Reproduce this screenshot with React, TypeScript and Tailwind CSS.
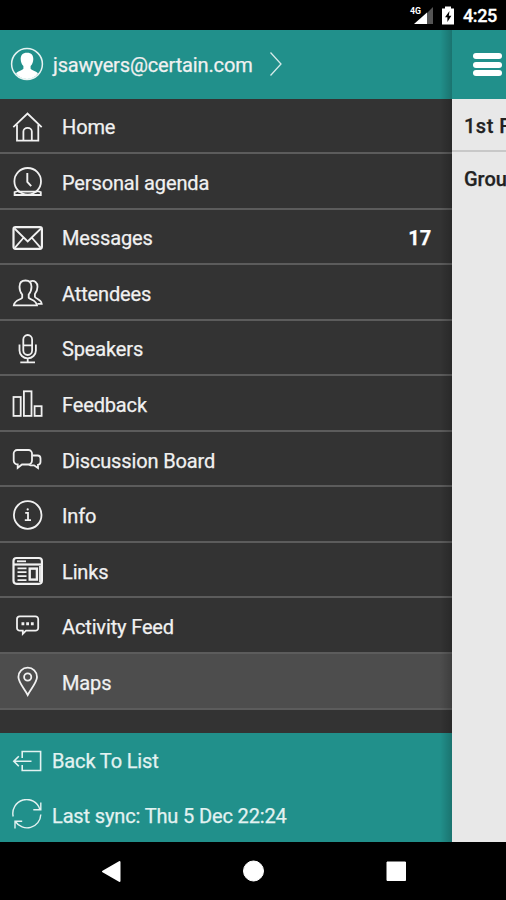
import type { ReactNode } from "react";

const menu: { label: string; icon: ReactNode; badge?: string; active?: boolean }[] = [
  {
    label: "Home",
    icon: (
      <>
        <path d="M1.3 16.2 15.5 2.6 29.7 16.2" />
        <path d="M5 13.5V29.6H26.3V13.5" />
        <path d="M11.4 29.4V20.5a4.2 3.6 0 0 1 8.4 0V29.4" />
      </>
    ),
  },
  {
    label: "Personal agenda",
    icon: (
      <>
        <circle cx="15.7" cy="15.3" r="13.3" />
        <path d="M6.2 25 2.6 26.2V29H28.8V26.2L25.2 25M6 25.6H25.4" />
        <path d="M15.3 7V15.8L19.2 20.2" strokeWidth="1.9" />
      </>
    ),
  },
  {
    label: "Messages",
    badge: "17",
    icon: (
      <>
        <rect x="1.5" y="5.2" width="28.4" height="21.6" rx="2" strokeWidth="2.2" />
        <path d="M2.5 6.5 15.7 19.5 29 6.5M2.8 25.8 11.3 16M28.7 25.8 20.1 16" />
      </>
    ),
  },
  {
    label: "Attendees",
    icon: (
      <>
        <path d="M13.5 3.5c4 0 6 2.6 6 6.2 0 3.7-1.2 6-2.8 7.8v3.2c1.2 2.1 7.5 2.3 8.3 7.6H1.8c.8-5.3 7.1-5.5 8.4-7.6v-3.2C8.6 15.7 7.5 13.4 7.5 9.7c0-3.6 2-6.2 6-6.2Z" />
        <path d="M18.2 4.4c4.5-1.6 7.3 1.3 7.3 5.3 0 3.5-1.2 5.6-2.6 7.3v2.9c1.2 2.1 6 2.3 6.8 6.9h-4.3" />
      </>
    ),
  },
  {
    label: "Speakers",
    icon: (
      <>
        <rect x="11.3" y="2" width="8.8" height="20" rx="4.4" />
        <path d="M11.5 12.3H20M7.5 11.5V17.5a8.2 7.8 0 0 0 16.4 0V11.5M15.7 25.3V29M8.3 29.3H23" />
      </>
    ),
  },
  {
    label: "Feedback",
    icon: (
      <>
        <rect x="1.5" y="9" width="7.2" height="18.9" />
        <rect x="11.9" y="3.3" width="7.6" height="24.6" />
        <rect x="22.6" y="18.2" width="7" height="9.7" />
      </>
    ),
  },
  {
    label: "Discussion Board",
    icon: (
      <>
        <path d="M5.7 20.5A4 4 0 0 1 1.7 16.5V9.5A3.5 3.5 0 0 1 5.2 6H16.5A3.5 3.5 0 0 1 20 9.5V16.5A4 4 0 0 1 16 20.5H10L5.7 23.8Z" />
        <path d="M20.5 11.5H25.5A3 3 0 0 1 28.5 14.5V18A3 3 0 0 1 26 20.8V24L22 21.3H18.5L16.5 20.5" />
      </>
    ),
  },
  {
    label: "Info",
    icon: (
      <>
        <circle cx="15.7" cy="16" r="13.8" />
        <path d="M13.2 13.8H16V21M12.8 21.2H19" />
        <circle cx="15.7" cy="10.4" r="1.1" fill="currentColor" stroke="none" />
      </>
    ),
  },
  {
    label: "Links",
    icon: (
      <>
        <rect x="1.5" y="3" width="28.4" height="25.8" rx="3" strokeWidth="2.2" />
        <path d="M2 9.5H29.5" strokeWidth="2.2" />
        <path d="M5 6.3H14" />
        <path d="M5.500 13.3H14.5M5.5 17.2H14.5M5.5 21.2H14.5M5.5 25.2H14.5" />
        <rect x="17.7" y="13.6" width="7.2" height="11" strokeWidth="2.4" />
        <path d="M28 11V27" />
      </>
    ),
  },
  {
    label: "Activity Feed",
    icon: (
      <>
        <path d="M7.8 6.3H23.4A2.8 2.8 0 0 1 26.2 9.1V17.9A2.8 2.8 0 0 1 23.4 20.7H14L10.8 23.9V20.7H7.8A2.8 2.8 0 0 1 5 17.9V9.1A2.8 2.8 0 0 1 7.8 6.3Z" />
        <path d="M9.5 13.8H12.3M14.2 13.8H17M18.9 13.8H21.7" strokeWidth="2.9" />
      </>
    ),
  },
  {
    label: "Maps",
    active: true,
    icon: (
      <>
        <path d="M15.7 29C13 23.5 6.4 16.5 6.4 11a9.3 9.3 0 0 1 18.6 0C25 16.5 18.4 23.5 15.7 29Z" />
        <circle cx="15.7" cy="11" r="3.6" />
      </>
    ),
  },
];

function Icon({ children }: { children: ReactNode }) {
  return (
    <svg viewBox="0 0 32 32" fill="none" stroke="currentColor" strokeWidth="1.8" className="size-8 shrink-0">
      {children}
    </svg>
  );
}

function StatusBar() {
  return (
    <div className="flex h-[30px] shrink-0 items-center bg-black pl-[409px] text-white">
      <svg viewBox="0 0 46 24" className="h-6 w-[46px] shrink-0" fill="currentColor">
        <path d="M24 4V21H18V10Z" fill="#555" />
        <path d="M5 21 18 9.5V21Z" />
        <text x="1" y="10.5" fontSize="9" fontWeight="700" fontFamily="Roboto" textLength="11" lengthAdjust="spacingAndGlyphs">
          4G
        </text>
        <path d="M36 3.5h6v2h3V21.500H33V5.500h3Z" />
        <path d="M40.500 8 36 14.200h2.400V19l4-6.300h-2.600Z" fill="#000" />
      </svg>
      <span className="ml-[8px] pt-0.5 text-[18px] font-medium leading-[30px] tracking-[-0.4px] [-webkit-text-stroke:0.3px]">
        4:25
      </span>
    </div>
  );
}

function Drawer() {
  return (
    <aside className="relative flex w-[452px] shrink-0 flex-col bg-[#333] text-[20px] tracking-[-0.14px] text-[#f1f1f1] [-webkit-text-stroke:0.25px]">
      <header className="flex h-[68.5px] shrink-0 items-center bg-[#21908b] pl-[10px]">
        <svg viewBox="0 0 34 34" className="size-[34px] shrink-0" fill="none">
          <circle cx="17" cy="17" r="15.4" stroke="#e6f3f2" strokeWidth="1.5" />
          <path
            d="M17 5.7c4.5 0 6.500 2.600 6.300 6.600-.1 2.800-1 5.200-2.700 6.800v2.600c1 1.700 5.200 2 7.400 4.600C25.500 30 21.500 32 17 32S8.500 30 6 26.300c2.200-2.600 6.400-2.900 7.400-4.600v-2.600c-1.700-1.600-2.600-4-2.700-6.800-.2-4 1.800-6.600 6.300-6.600Z"
            fill="#fff"
          />
        </svg>
        <span className="ml-[9px] pt-px">jsawyers@certain.com</span>
        <svg viewBox="0 0 14 26" className="ml-4 h-[26px] w-[14px]" fill="none" stroke="#d5eae9" strokeWidth="1.3">
          <path d="M1.5 1.5 12 13 1.5 24.5" />
        </svg>
      </header>

      <nav className="flex flex-col">
        {menu.map(({ label, icon, badge, active }) => (
          <div
            key={label}
            className={`flex h-[55.56px] items-center border-b-2 border-[#5c5c5c] pl-3 pt-[2.5px] ${active ? "bg-[#4d4d4d]" : ""}`}
          >
            <Icon>{icon}</Icon>
            <span className="ml-[18px] pt-[1.5px]">{label}</span>
            {badge && <span className="ml-auto mr-[21px] pt-[1.5px] font-bold text-white">{badge}</span>}
          </div>
        ))}
      </nav>

      <footer className="mt-auto flex h-[108.5px] flex-col bg-[#21908b] pl-3 text-[#e3f2f1]">
        <div className="flex h-[55px] items-center">
          <Icon>
            <path d="M10.2 13V6.5H28.6V25.5H10.2V20M2 16.2H19.5M6.8 11.2 1.8 16.2 6.8 21.2" strokeWidth="1.6" />
          </Icon>
          <span className="ml-2 pt-px">Back To List</span>
        </div>
        <div className="flex h-[53px] items-center pt-px">
          <Icon>
            <path d="M1.2 17.5A13.8 13.8 0 0 1 27.8 10.2M28.8 3.5V10.7H21.3" strokeWidth="1.4" />
            <path d="M28.8 15.5A13.8 13.8 0 0 1 3.4 22.5M3 29.5V22.2H10.2" strokeWidth="1.4" />
          </Icon>
          <span className="ml-2 pt-px">Last sync: Thu 5 Dec 22:24</span>
        </div>
      </footer>

      <div className="absolute inset-y-0 right-0 w-3 bg-gradient-to-r from-transparent to-black/20" />
    </aside>
  );
}

function Page() {
  return (
    <main className="flex w-[54px] shrink-0 flex-col overflow-hidden whitespace-nowrap bg-[#e8e8e8] text-[20px] font-medium text-[#222] [-webkit-text-stroke:0.25px]">
      <div className="flex h-[68.5px] shrink-0 flex-col justify-center gap-[2.5px] bg-[#21908b] pl-[21px] pt-px">
        <span className="h-[6px] w-[29px] rounded-full bg-white" />
        <span className="h-[6px] w-[29px] rounded-full bg-white" />
        <span className="h-[6px] w-[29px] rounded-full bg-white" />
      </div>
      <div className="flex h-[53px] items-center border-b-2 border-[#c8c8c8] pl-3 pt-[3px] tracking-[0.5px]">1st Floor</div>
      <div className="flex h-[53px] items-center pl-3 pt-px">Ground</div>
    </main>
  );
}

export default function App() {
  return (
    <div className="flex h-[900px] w-[506px] flex-col overflow-hidden bg-black font-['Roboto',sans-serif]">
      <StatusBar />
      <div className="flex h-[811.5px] shrink-0">
        <Drawer />
        <Page />
      </div>
      <div className="flex flex-1 items-center bg-black">
        <svg viewBox="0 0 506 58" className="h-[58px] w-[506px]" fill="#fff" stroke="#fff" strokeLinejoin="round">
          <path d="M103 29.5 119.5 20V39Z" strokeWidth="2" />
          <circle cx="253.5" cy="29" r="10" />
          <rect x="387" y="20" width="18.5" height="18.5" />
        </svg>
      </div>
    </div>
  );
}
